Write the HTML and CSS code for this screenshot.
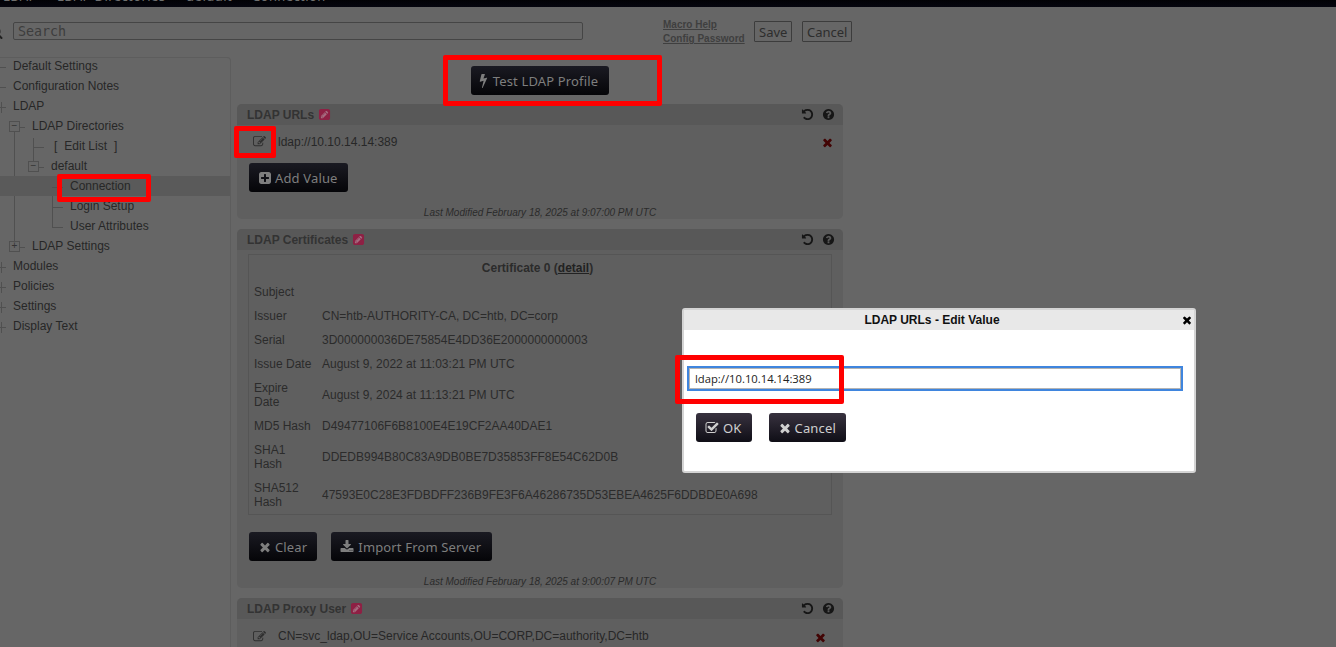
FILE: index.html
```html
<!DOCTYPE html>
<html lang="en">

<head>
    <meta charset="UTF-8">
    <title>LDAP Connection</title>
    <link rel="stylesheet" href="styles.css">
</head>

<body>
    <svg class="sprite" xmlns="http://www.w3.org/2000/svg">
        <symbol id="i-times" viewBox="0 0 1792 1792"><path d="M1490 1322q0 40-28 68l-136 136q-28 28-68 28t-68-28l-294-294-294 294q-28 28-68 28t-68-28l-136-136q-28-28-28-68t28-68l294-294-294-294q-28-28-28-68t28-68l136-136q28-28 68-28t68 28l294 294 294-294q28-28 68-28t68 28l136 136q28 28 28 68t-28 68l-294 294 294 294q28 28 28 68z"/></symbol>
        <symbol id="i-bolt" viewBox="0 0 1792 1792"><path d="M1333 566q18 20 7 44l-540 1157q-13 25-42 25-4 0-14-2-17-5-25.5-19t-4.5-30l197-808-406 101q-4 1-12 1-18 0-31-11-18-15-13-39l201-825q4-14 16-23t28-9h328q19 0 32 12.5t13 29.5q0 8-5 18l-171 463 396-98q8-2 12-2 19 0 34 15z"/></symbol>
        <symbol id="i-plus" viewBox="0 0 1792 1792"><path d="M1408 960v-128q0-26-19-45t-45-19h-320v-320q0-26-19-45t-45-19h-128q-26 0-45 19t-19 45v320h-320q-26 0-45 19t-19 45v128q0 26 19 45t45 19h320v320q0 26 19 45t45 19h128q26 0 45-19t19-45v-320h320q26 0 45-19t19-45zm256-544v960q0 119-84.5 203.5t-203.5 84.5h-960q-119 0-203.5-84.5t-84.5-203.5v-960q0-119 84.5-203.5t203.5-84.5h960q119 0 203.5 84.5t84.5 203.5z"/></symbol>
        <symbol id="i-help" viewBox="0 0 1792 1792"><path d="M1024 1376v-192q0-14-9-23t-23-9h-192q-14 0-23 9t-9 23v192q0 14 9 23t23 9h192q14 0 23-9t9-23zm256-672q0-88-55.5-163t-138.5-116-170-41q-243 0-371 213-15 24 8 42l132 100q7 6 19 6 16 0 25-12 53-68 86-92 34-24 86-24 48 0 85.5 26t37.5 59q0 38-20 61t-68 45q-63 28-115.5 86.5t-52.5 125.5v36q0 14 9 23t23 9h192q14 0 23-9t9-23q0-19 21.5-49.5t54.5-49.5q32-18 49-28.5t46-35 44.5-48 28-60.5 12.5-81zm384 192q0 209-103 385.5t-279.5 279.5-385.5 103-385.5-103-279.5-279.5-103-385.5 103-385.5 279.5-279.5 385.5-103 385.5 103 279.5 279.5 103 385.5z"/></symbol>
        <symbol id="i-undo" viewBox="0 0 1792 1792"><path d="M1664 896q0 156-61 298t-164 245-245 164-298 61q-172 0-327-72.5t-264-204.5q-7-10-6.5-22.5t8.5-20.5l137-138q10-9 25-9 16 2 23 12 73 95 179 147t225 52q104 0 198.5-40.5t163.5-109.5 109.5-163.5 40.5-198.5-40.5-198.5-109.5-163.5-163.5-109.5-198.5-40.5q-98 0-188 35.5t-160 101.5l137 138q31 30 14 69-17 40-59 40h-448q-26 0-45-19t-19-45v-448q0-42 40-59 39-17 69 14l130 129q107-101 244.5-156.5t284.5-55.5q156 0 298 61t245 164 164 245 61 298z"/></symbol>
        <symbol id="i-download" viewBox="0 0 1792 1792"><path d="M1344 1344q0-26-19-45t-45-19-45 19-19 45 19 45 45 19 45-19 19-45zm256 0q0-26-19-45t-45-19-45 19-19 45 19 45 45 19 45-19 19-45zm128-224v320q0 40-28 68t-68 28h-1472q-40 0-68-28t-28-68v-320q0-40 28-68t68-28h465l135 136q58 56 136 56t136-56l136-136h464q40 0 68 28t28 68zm-325-569q17 41-14 70l-448 448q-18 19-45 19t-45-19l-448-448q-31-29-14-70 17-39 59-39h256v-448q0-26 19-45t45-19h256q26 0 45 19t19 45v448h256q42 0 59 39z"/></symbol>
        <symbol id="i-edit" viewBox="0 0 1792 1792"><path d="M888 1184l116-116-152-152-116 116v56h96v96h56zm440-720q-16-16-33 1l-350 350q-17 17-1 33t33-1l350-350q17-17 1-33zm80 594v190q0 119-84.5 203.5t-203.5 84.5h-832q-119 0-203.5-84.5t-84.5-203.5v-832q0-119 84.5-203.5t203.5-84.5h832q63 0 117 25 15 7 18 23 3 17-9 29l-49 49q-14 14-32 8-23-6-45-6h-832q-66 0-113 47t-47 113v832q0 66 47 113t113 47h832q66 0 113-47t47-113v-126q0-13 9-22l64-64q15-15 35-7t20 29zm-96-738l288 288-672 672h-288v-288zm444 132l-92 92-288-288 92-92q28-28 68-28t68 28l152 152q28 28 28 68t-28 68z"/></symbol>
        <symbol id="i-check" viewBox="0 0 1792 1792"><path d="M1472 930v318q0 119-84.5 203.5t-203.5 84.5h-832q-119 0-203.5-84.5t-84.5-203.5v-832q0-119 84.5-203.5t203.5-84.5h832q63 0 117 25 15 7 18 23 3 17-9 29l-49 49q-10 10-23 10-3 0-9-2-23-6-45-6h-832q-66 0-113 47t-47 113v832q0 66 47 113t113 47h832q66 0 113-47t47-113v-254q0-13 9-22l64-64q10-10 23-10 6 0 12 3 20 8 20 29zm231-489l-814 814q-24 24-57 24t-57-24l-430-430q-24-24-24-57t24-57l110-110q24-24 57-24t57 24l263 263 647-647q24-24 57-24t57 24l110 110q24 24 24 57t-24 57z"/></symbol>
        <symbol id="i-pencil" viewBox="0 0 1792 1792"><path d="M532 1108l152 152-52 52h-56v-96h-96v-56zm414-390q14 13-3 30l-291 291q-17 17-30 3-14-13 3-30l291-291q17-17 30-3zm-274 690l544-544-288-288-544 544v288h288zm608-608l92-92q28-28 28-68t-28-68l-152-152q-28-28-68-28t-68 28l-92 92zm384-384v960q0 119-84.5 203.5t-203.5 84.5h-960q-119 0-203.5-84.5t-84.5-203.5v-960q0-119 84.5-203.5t203.5-84.5h960q119 0 203.5 84.5t84.5 203.5z"/></symbol>
        <symbol id="i-search" viewBox="0 0 1792 1792"><path d="M1216 832q0-185-131.5-316.5t-316.5-131.5-316.5 131.5-131.5 316.5 131.5 316.5 316.5 131.5 316.5-131.5 131.5-316.5zm512 832q0 52-38 90t-90 38q-54 0-90-38l-343-342q-179 124-399 124-143 0-273.5-55.5t-225-150-150-225-55.5-273.5 55.5-273.5 150-225 225-150 273.5-55.5 273.5 55.5 225 150 150 225 55.5 273.5q0 220-124 399l343 343q37 37 37 90z"/></symbol>
    </svg>

    <div class="topbar">
        <span class="crumb crumb-a">LDAP</span>
        <span class="crumb crumb-b">LDAP Directories</span>
        <span class="crumb crumb-c">default</span>
        <span class="crumb">Connection</span>
    </div>

    <div class="toolbar">
        <svg class="ico search-ico"><use href="#i-search"/></svg>
        <div class="search-box">Search</div>
        <div class="tool-links">
            <a href="#">Macro Help</a>
            <a href="#">Config Password</a>
        </div>
        <button class="plain-btn save-btn">Save</button>
        <button class="plain-btn">Cancel</button>
    </div>

    <div class="content">
        <!-- left navigation tree -->
        <div class="sidebar">
            <ul class="tree">
                <li class="leaf0">Default Settings</li>
                <li class="leaf0">Configuration Notes</li>
                <li class="leaf0 boxed">LDAP</li>
                <li class="sub1">
                    <ul>
                        <li class="lvl1"><i class="toggle">−</i>LDAP Directories</li>
                        <li class="sub2">
                            <ul>
                                <li class="lvl2 edit-list"><span>[</span>Edit List<span>]</span></li>
                                <li class="lvl2"><i class="toggle">−</i>default</li>
                                <li class="sub3">
                                    <ul>
                                        <li class="lvl3">Connection</li>
                                        <li class="lvl3">Login Setup</li>
                                        <li class="lvl3">User Attributes</li>
                                    </ul>
                                </li>
                            </ul>
                        </li>
                        <li class="lvl1"><i class="toggle">+</i>LDAP Settings</li>
                    </ul>
                </li>
                <li class="leaf0 boxed">Modules</li>
                <li class="leaf0 boxed">Policies</li>
                <li class="leaf0 boxed">Settings</li>
                <li class="leaf0 boxed">Display Text</li>
            </ul>
        </div>

        <div class="main">
            <div class="test-row">
                <button class="dark-btn test-btn"><svg class="ico"><use href="#i-bolt"/></svg>Test LDAP Profile</button>
            </div>

            <div class="panel">
                <div class="panel-head">
                    <span class="panel-title">LDAP URLs</span>
                    <svg class="ico red-edit"><use href="#i-pencil"/></svg>
                    <svg class="ico head-ico undo"><use href="#i-undo"/></svg>
                    <svg class="ico head-ico"><use href="#i-help"/></svg>
                </div>
                <div class="value-row">
                    <svg class="ico edit-ico"><use href="#i-edit"/></svg>
                    <span class="value-text">ldap://10.10.14.14:389</span>
                    <svg class="ico del-ico"><use href="#i-times"/></svg>
                </div>
                <div class="btn-row">
                    <button class="dark-btn"><svg class="ico"><use href="#i-plus"/></svg>Add Value</button>
                </div>
                <div class="modified">Last Modified February 18, 2025 at 9:07:00 PM UTC</div>
            </div>

            <div class="panel">
                <div class="panel-head">
                    <span class="panel-title">LDAP Certificates</span>
                    <svg class="ico red-edit"><use href="#i-pencil"/></svg>
                    <svg class="ico head-ico undo"><use href="#i-undo"/></svg>
                    <svg class="ico head-ico"><use href="#i-help"/></svg>
                </div>
                <table class="cert">
                    <tr>
                        <th colspan="2">Certificate 0 (<a href="#">detail</a>)</th>
                    </tr>
                    <tr>
                        <td class="cert-label">Subject</td>
                        <td></td>
                    </tr>
                    <tr>
                        <td class="cert-label">Issuer</td>
                        <td>CN=htb-AUTHORITY-CA, DC=htb, DC=corp</td>
                    </tr>
                    <tr>
                        <td class="cert-label">Serial</td>
                        <td>3D000000036DE75854E4DD36E2000000000003</td>
                    </tr>
                    <tr>
                        <td class="cert-label">Issue Date</td>
                        <td>August 9, 2022 at 11:03:21 PM UTC</td>
                    </tr>
                    <tr>
                        <td class="cert-label">Expire Date</td>
                        <td>August 9, 2024 at 11:13:21 PM UTC</td>
                    </tr>
                    <tr>
                        <td class="cert-label">MD5 Hash</td>
                        <td>D49477106F6B8100E4E19CF2AA40DAE1</td>
                    </tr>
                    <tr>
                        <td class="cert-label">SHA1 Hash</td>
                        <td>DDEDB994B80C83A9DB0BE7D35853FF8E54C62D0B</td>
                    </tr>
                    <tr>
                        <td class="cert-label">SHA512 Hash</td>
                        <td>47593E0C28E3FDBDFF236B9FE3F6A46286735D53EBEA4625F6DDBDE0A698</td>
                    </tr>
                </table>
                <div class="btn-row cert-btns">
                    <button class="dark-btn"><svg class="ico"><use href="#i-times"/></svg>Clear</button>
                    <button class="dark-btn import-btn"><svg class="ico"><use href="#i-download"/></svg>Import From Server</button>
                </div>
                <div class="modified">Last Modified February 18, 2025 at 9:00:07 PM UTC</div>
            </div>

            <div class="panel">
                <div class="panel-head">
                    <span class="panel-title">LDAP Proxy User</span>
                    <svg class="ico red-edit"><use href="#i-pencil"/></svg>
                    <svg class="ico head-ico undo"><use href="#i-undo"/></svg>
                    <svg class="ico head-ico"><use href="#i-help"/></svg>
                </div>
                <div class="value-row proxy-row">
                    <svg class="ico edit-ico"><use href="#i-edit"/></svg>
                    <span class="value-text">CN=svc_ldap,OU=Service Accounts,OU=CORP,DC=authority,DC=htb</span>
                    <svg class="ico del-ico"><use href="#i-times"/></svg>
                </div>
            </div>
        </div>
    </div>

    <!-- edit dialog -->
    <div class="dialog">
        <div class="dialog-head">
            LDAP URLs - Edit Value
            <svg class="ico dialog-close"><use href="#i-times"/></svg>
        </div>
        <div class="dialog-body">
            <input class="dialog-input" type="text" value="ldap://10.10.14.14:389">
            <div class="dialog-btns">
                <button class="dark-btn dialog-btn ok-btn"><svg class="ico"><use href="#i-check"/></svg>OK</button>
                <button class="dark-btn dialog-btn"><svg class="ico"><use href="#i-times"/></svg>Cancel</button>
            </div>
        </div>
    </div>

    <!-- red annotation boxes -->
    <div class="mark mark-test"></div>
    <div class="mark mark-edit"></div>
    <div class="mark mark-conn"></div>
    <div class="mark mark-input"></div>
</body>

</html>
```

FILE: styles.css
```css
* {
    box-sizing: border-box;
}

html,
body {
    height: 647px;
    overflow: hidden;
}

body {
    margin: 0;
    background: #666;
    color: #272727;
    font-family: "Liberation Sans", Arial, sans-serif;
    font-size: 12px;
}

.sprite {
    display: none;
}

.ico {
    display: inline-block;
    width: 14px;
    height: 14px;
    fill: currentColor;
    flex: none;
}

/* top bar */
.topbar {
    display: flex;
    height: 7px;
    overflow: hidden;
    padding-left: 3px;
    background: linear-gradient(#020206, #06060f);
    color: #6f6f6f;
    font-family: "Noto Sans", sans-serif;
    font-size: 13px;
    line-height: 14px;
}

.crumb {
    margin-top: -11px;
    letter-spacing: 0.4px;
}

.crumb-a {
    width: 54px;
}

.crumb-b {
    width: 129px;
}

.crumb-c {
    width: 66px;
}

/* search row */
.toolbar {
    display: flex;
    align-items: flex-start;
    height: 50px;
}

.search-ico {
    margin: 18px 0 0 -11px;
    color: #1f1f1f;
}

.search-box {
    width: 570px;
    height: 18px;
    margin: 15px 0 0 10px;
    padding-left: 4px;
    border: 1px solid #454545;
    border-radius: 2px;
    color: #3d3d3d;
    font-family: "DejaVu Sans Mono", monospace;
    font-size: 13.333px;
    line-height: 17px;
}

.tool-links {
    display: flex;
    flex-direction: column;
    width: 91px;
    margin: 11px 0 0 80px;
    line-height: 14px;
}

.tool-links a {
    color: #3f3f3f;
    font-size: 10px;
    font-weight: bold;
}

.plain-btn {
    height: 21px;
    margin: 14px 0 0 10px;
    padding: 0 4px;
    border: 1px solid #3c3c3c;
    border-radius: 1px;
    background: none;
    color: #2d2d2d;
    font-family: "Noto Sans", sans-serif;
    font-size: 13px;
}

.save-btn {
    margin-left: 0;
    width: 38px;
}

.plain-btn:last-child {
    width: 50px;
}

/* tree */
.content {
    display: flex;
}

.sidebar {
    width: 231px;
    height: 590px;
    border-top: 1px solid #5d5d5d;
    border-right: 1px solid #5d5d5d;
    border-top-right-radius: 4px;
}

.tree,
.tree ul {
    margin: 0;
    padding: 0;
    list-style: none;
}

.tree {
    margin-top: -2px;
}

.tree li {
    position: relative;
    line-height: 20px;
}

.leaf0,
.lvl1,
.lvl2,
.lvl3 {
    height: 20px;
    white-space: nowrap;
}

.leaf0 {
    padding-left: 13px;
}

.lvl1 {
    padding-left: 32px;
}

.lvl2 {
    padding-left: 51px;
}

.lvl3 {
    padding-left: 70px;
}

.leaf0::before,
.lvl1::before,
.lvl2::before,
.lvl3::before {
    content: "";
    position: absolute;
    top: 11px;
    height: 1px;
    background: #505050;
}

.leaf0::before {
    left: 0;
    width: 6px;
}

/* right edge of the expander box that is cut off by the window */
.boxed::after {
    content: "";
    position: absolute;
    left: 1px;
    top: 6px;
    width: 1px;
    height: 11px;
    background: #505050;
}

.lvl1::before {
    left: 15px;
    width: 10px;
}

.lvl2::before {
    left: 33px;
    width: 11px;
}

.lvl3::before {
    left: 52px;
    width: 11px;
}

.sub1::before,
.sub2::before,
.sub3::before {
    content: "";
    position: absolute;
    width: 1px;
    background: #505050;
}

.sub1::before {
    left: 14px;
    top: 15px;
    bottom: 13px;
}

.sub2::before {
    left: 33px;
    top: 2px;
    height: 26px;
}

.sub3::before {
    left: 52px;
    top: 0;
    height: 52px;
}

.toggle {
    position: absolute;
    top: 5px;
    z-index: 1;
    width: 11px;
    height: 11px;
    border: 1px solid #505050;
    background: #666;
    color: #333;
    font-style: normal;
    font-size: 10px;
    line-height: 8px;
    text-align: center;
}

.lvl1 .toggle {
    left: 9px;
}

.lvl2 .toggle {
    left: 28px;
}

.edit-list {
    display: flex;
    gap: 7px;
    padding-left: 54px;
}

.sub3 li:first-child {
    background: #5a5a5a;
}

/* main column */
.main {
    width: 606px;
    margin-left: 6px;
}

.test-row {
    display: flex;
    justify-content: center;
    padding: 9px 0;
}

.dark-btn {
    display: inline-flex;
    align-items: center;
    gap: 3px;
    height: 29px;
    padding: 0 10px 0 9px;
    border: 0;
    border-radius: 3px;
    background: linear-gradient(#1a1a22, #050508);
    color: #7e7e7e;
    font-family: "Noto Sans", sans-serif;
    font-size: 13px;
    letter-spacing: 0.15px;
}

.test-btn {
    gap: 2px;
    padding: 0 11px 0 5px;
}

.test-btn .ico {
    width: 15px;
    height: 15px;
}

.import-btn {
    gap: 4px;
    padding-right: 11px;
}

.panel {
    margin-bottom: 10px;
    border-radius: 5px;
    background: #5f5f5f;
}

.panel-head {
    display: flex;
    align-items: center;
    height: 21px;
    padding: 0 8px 0 10px;
    border-radius: 5px 5px 0 0;
    background: #585858;
}

.panel-title {
    color: #333;
    font-weight: bold;
}

/* the pale fill only shows through the pencil cut-out */
.red-edit {
    width: 13px;
    height: 13px;
    margin-left: 4px;
    background: linear-gradient(#a56c80, #a56c80) center / 8px 8px no-repeat;
    color: #8e2044;
}

.head-ico {
    width: 13px;
    height: 13px;
    margin-left: 8px;
    color: #161616;
}

.undo {
    margin-left: auto;
}

.value-row {
    display: flex;
    align-items: center;
    height: 33px;
    padding: 0 9px 0 16px;
    font-size: 12px;
}

.edit-ico {
    width: 13px;
    height: 13px;
    color: #2f2f2f;
}

.value-text {
    margin-left: 12px;
}

.del-ico {
    width: 13px;
    height: 13px;
    margin-top: 2px;
    margin-left: auto;
    color: #420404;
}

.proxy-row {
    height: 34px;
    padding-right: 16px;
}

.btn-row {
    display: flex;
    gap: 14px;
    padding: 5px 12px 0;
}

.modified {
    margin-top: 15px;
    color: #2b2b2b;
    font-size: 10px;
    font-style: italic;
    line-height: 12px;
    text-align: center;
}

.cert {
    width: 584px;
    margin: 4px 0 0 11px;
    border: 1px solid #555;
    border-collapse: separate;
    border-spacing: 0;
    color: #2b2b2b;
    line-height: 14px;
}

.cert th {
    padding: 6px 10px 5px 5px;
    font-size: 12px;
}

.cert a {
    color: #222;
}

.cert td {
    padding: 5px;
}

.cert-label {
    width: 68px;
}

.cert-btns {
    padding-top: 17px;
}

/* dialog */
.dialog {
    position: absolute;
    left: 682px;
    top: 308px;
    width: 514px;
    height: 165px;
    border: 2px solid #d4d4d4;
    border-radius: 3px;
    background: #fff;
}

.dialog-head {
    position: relative;
    height: 20px;
    padding-right: 14px;
    background: #e8e8e8;
    color: #111;
    font-weight: bold;
    line-height: 20px;
    text-align: center;
}

.dialog-close {
    position: absolute;
    right: 1px;
    top: 4px;
    width: 12px;
    height: 12px;
    color: #000;
}

.dialog-body {
    padding: 38px 5px 0;
}

.dialog-input {
    display: block;
    width: 492px;
    height: 21px;
    padding: 0 5px;
    border: 1px solid #b4b4b4;
    outline: 2px solid #3f85de;
    color: #222;
    font-family: "Open Sans", sans-serif;
    font-size: 11.25px;
}

.dialog-btns {
    display: flex;
    gap: 17px;
    padding: 24px 0 0 7px;
}

.dialog-btn {
    background: linear-gradient(#38323f, #0f0e16);
    color: #cfcfcf;
}

.ok-btn {
    gap: 4px;
}

/* annotations */
.mark {
    position: absolute;
    border: 5px solid #f00;
    border-radius: 2px;
}

.mark-test {
    left: 443px;
    top: 55px;
    width: 219px;
    height: 51px;
}

.mark-edit {
    left: 234px;
    top: 126px;
    width: 42px;
    height: 32px;
}

.mark-conn {
    left: 57px;
    top: 174px;
    width: 94px;
    height: 28px;
}

.mark-input {
    left: 675px;
    top: 355px;
    width: 169px;
    height: 49px;
}
```
